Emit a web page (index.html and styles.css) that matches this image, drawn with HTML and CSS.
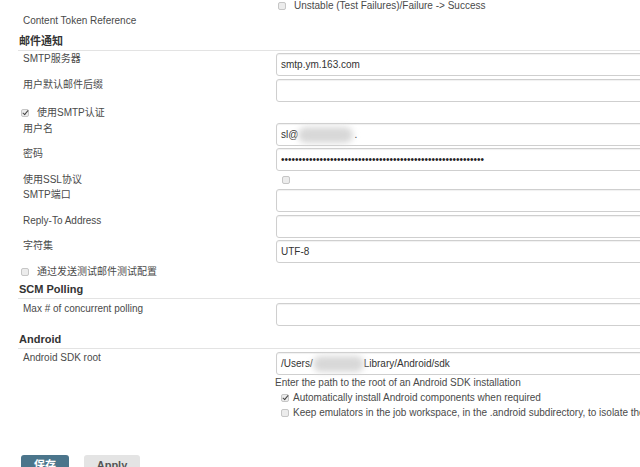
FILE: index.html
```html
<!DOCTYPE html>
<html lang="zh-CN">

<head>
  <meta charset="UTF-8" />
  <title>Jenkins 系统设置</title>
  <link rel="stylesheet" href="styles.css">
</head>

<body>
  <div class="page">
    <div class="row row-top">
      <div class="label"></div>
      <div class="value check-line"><span class="cb"></span>Unstable (Test Failures)/Failure -&gt; Success</div>
    </div>
    <div class="row row-plain">
      <div class="label">Content Token Reference</div>
    </div>

    <div class="section section-mail">邮件通知</div>
    <div class="row field pt-2">
      <div class="label">SMTP服务器</div>
      <div class="value"><div class="input">smtp.ym.163.com</div></div>
    </div>
    <div class="row field pt-3">
      <div class="label">用户默认邮件后缀</div>
      <div class="value"><div class="input"></div></div>
    </div>
    <div class="left-check check-smtp"><span class="cb on"></span>使用SMTP认证</div>
    <div class="row field pt-1">
      <div class="label">用户名</div>
      <div class="value"><div class="input">sl@<span class="blur blur-user"></span>.</div></div>
    </div>
    <div class="row field pt-2">
      <div class="label">密码</div>
      <div class="value"><div class="input pwd">••••••••••••••••••••••••••••••••••••••••••••••••••••••••••</div></div>
    </div>
    <div class="row row-ssl">
      <div class="label">使用SSL协议</div>
      <div class="value check-line"><span class="cb"></span></div>
    </div>
    <div class="row field pt-1">
      <div class="label">SMTP端口</div>
      <div class="value"><div class="input"></div></div>
    </div>
    <div class="row field pt-3">
      <div class="label">Reply-To Address</div>
      <div class="value"><div class="input"></div></div>
    </div>
    <div class="row field pt-2">
      <div class="label">字符集</div>
      <div class="value"><div class="input">UTF-8</div></div>
    </div>
    <div class="left-check check-test"><span class="cb"></span>通过发送测试邮件测试配置</div>

    <div class="section section-scm">SCM Polling</div>
    <div class="row field pt-4">
      <div class="label">Max # of concurrent polling</div>
      <div class="value"><div class="input"></div></div>
    </div>

    <div class="section section-android">Android</div>
    <div class="row field pt-3">
      <div class="label">Android SDK root</div>
      <div class="value"><div class="input">/Users/<span class="blur blur-path"></span>Library/Android/sdk</div></div>
    </div>
    <div class="row row-sub">
      <div class="label"></div>
      <div class="value help">Enter the path to the root of an Android SDK installation</div>
    </div>
    <div class="row row-sub">
      <div class="label"></div>
      <div class="value check-line"><span class="cb on"></span>Automatically install Android components when required</div>
    </div>
    <div class="row row-sub">
      <div class="label"></div>
      <div class="value check-line"><span class="cb"></span>Keep emulators in the job workspace, in the .android subdirectory, to isolate them from other jobs</div>
    </div>

    <div class="buttons">
      <button class="btn btn-save">保存</button>
      <button class="btn btn-apply">Apply</button>
    </div>
  </div>
</body>

</html>
```

FILE: styles.css
```css
:root {
  --color-text: #4a4a4a;
  --color-head: #333;
  --color-line: #e3e3e3;
  --color-input-border: #cfcfcf;
  --color-save: #4b758b;
  --color-apply: #e4e4e4;
  --font-base: "Liberation Sans", Arial, "Noto Sans CJK SC", sans-serif;
}

* {
  box-sizing: border-box;
}

body {
  margin: 0;
  background: #fff;
  color: var(--color-text);
  font-family: var(--font-base);
  font-size: 10px;
  overflow: hidden;
}

.page {
  width: 1000px;
  margin-left: 18px;
}

.row {
  display: grid;
  grid-template-columns: 258px 1fr;
}

.label {
  padding-left: 5px;
  line-height: 12px;
}

/* top rows */
.row-top {
  height: 11px;
  line-height: 11px;
}

.row-top .label,
.row-ssl .label {
  line-height: inherit;
}

.row-plain {
  padding-top: 2px;
  height: 18px;
}

.row-plain .label {
  line-height: 16px;
}

/* section headings */
.section {
  padding-left: 1px;
  padding-bottom: 2px;
  line-height: 14px;
  font-size: 11px;
  font-weight: bold;
  color: var(--color-head);
  border-bottom: 1px solid var(--color-line);
}

.section-mail {
  padding-top: 5px;
}

.section-scm {
  padding-top: 2px;
}

.section-android {
  padding-top: 6px;
}

/* text fields */
.pt-1 {
  padding-top: 1px;
}

.pt-2 {
  padding-top: 2px;
}

.pt-3 {
  padding-top: 3px;
}

.pt-4 {
  padding-top: 4px;
}

.input {
  height: 23px;
  padding-left: 4px;
  line-height: 21px;
  color: #333;
  background: #fff;
  border: 1px solid var(--color-input-border);
  border-radius: 3px;
  box-shadow: inset 0 1px 1px rgba(0, 0, 0, 0.06);
  white-space: nowrap;
}

.pwd {
  font-size: 10px;
  letter-spacing: 0;
  color: #222;
}

.blur {
  display: inline-block;
  height: 16px;
  vertical-align: middle;
  background: #d8d8d8;
  border-radius: 8px;
  filter: blur(3px);
}

.blur-user {
  width: 55px;
  margin-right: 1px;
}

.blur-path {
  width: 51px;
}

/* checkboxes */
.cb {
  position: relative;
  display: inline-block;
  width: 8px;
  height: 8px;
  vertical-align: -1px;
  background: #ececec;
  border: 1px solid #c6c6c6;
  border-radius: 2px;
}

.cb.on::after {
  content: "";
  position: absolute;
  left: 2px;
  top: -1px;
  width: 2px;
  height: 5px;
  border: solid #444;
  border-width: 0 1.5px 1.5px 0;
  transform: rotate(40deg);
}

.check-line {
  padding-left: 4px;
  white-space: nowrap;
}

.check-line .cb {
  margin-right: 4px;
}

.row-top .check-line {
  padding-left: 2px;
}

.row-top .check-line .cb {
  margin-right: 8px;
}

.left-check {
  padding-left: 3px;
  white-space: nowrap;
}

.left-check .cb {
  margin-right: 8px;
}

.check-smtp {
  padding-top: 2px;
  height: 20px;
  line-height: 18px;
}

.check-test {
  height: 17px;
  line-height: 17px;
}

.row-ssl {
  height: 17px;
  line-height: 17px;
}

.row-ssl .check-line {
  padding-left: 6px;
}

.row-sub {
  height: 15px;
  line-height: 15px;
}

.help {
  margin-left: -1px;
}

.row-sub .check-line {
  padding-left: 5px;
}

/* buttons */
.buttons {
  display: flex;
  gap: 15px;
  margin-top: 35px;
  padding-left: 3px;
}

.btn {
  height: 20px;
  border: none;
  border-radius: 3px;
  font-family: var(--font-base);
  font-size: 11px;
  font-weight: bold;
  line-height: 20px;
  padding: 0;
}

.btn-save {
  width: 48px;
  background: var(--color-save);
  color: #fff;
}

.btn-apply {
  width: 56px;
  background: var(--color-apply);
  color: #555;
}
```
